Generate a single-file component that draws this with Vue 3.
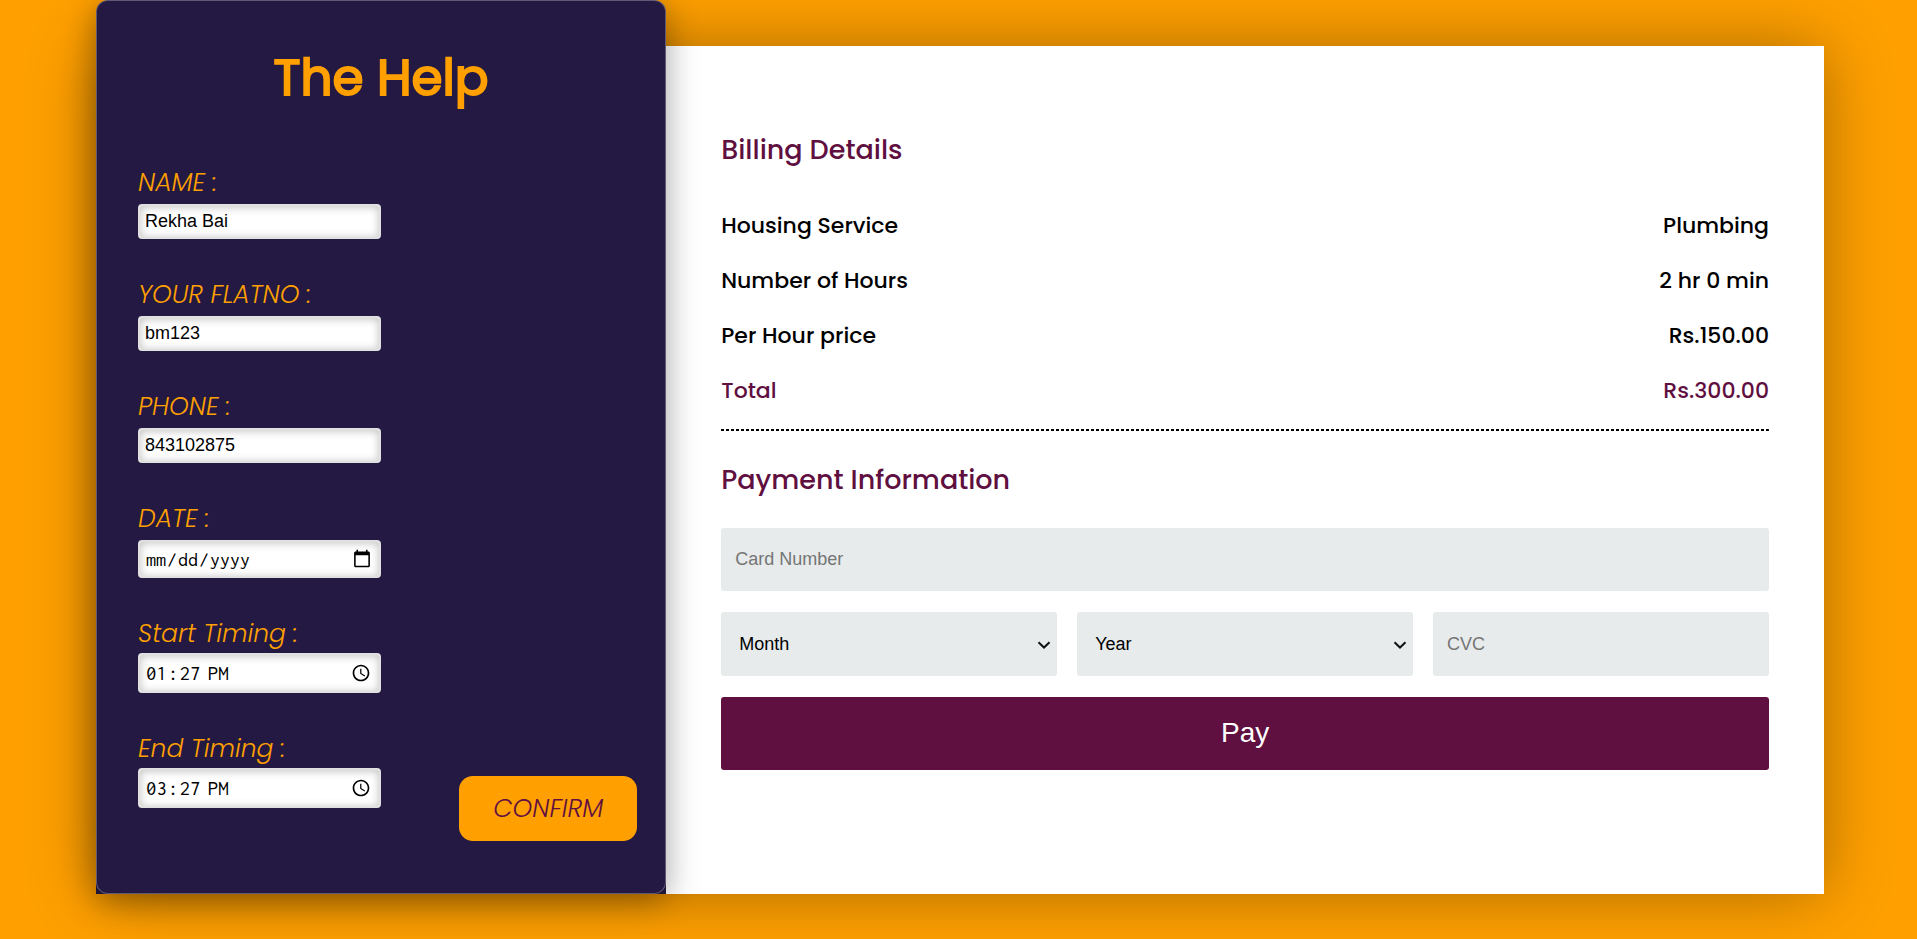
<script setup>
import { ref } from 'vue'

const name = ref('Rekha Bai')
const flat = ref('bm123')
const phone = ref('843102875')
const date = ref('')
const start = ref('13:27')
const end = ref('15:27')
const card = ref('')
const month = ref('')
const year = ref('')
const cvc = ref('')

const months = ['Jan', 'Feb', 'Mar', 'Apr', 'May', 'Jun', 'Jul', 'Aug', 'Sep', 'Oct', 'Nov', 'Dec']
const years = [2022, 2023, 2024, 2025, 2026, 2027]

const bill = [
  { label: 'Housing Service', value: 'Plumbing' },
  { label: 'Number of Hours', value: '2 hr 0 min' },
  { label: 'Per Hour price', value: 'Rs.150.00' },
  { label: 'Total', value: 'Rs.300.00', total: true }
]
</script>

<template>
  <main class="page">
    <div class="card">
      <form class="booking" @submit.prevent>
        <h1>The Help</h1>
        <div class="field">
          <label for="name">NAME :</label>
          <input id="name" v-model="name" type="text">
        </div>
        <div class="field">
          <label for="flat">YOUR FLATNO :</label>
          <input id="flat" v-model="flat" type="text">
        </div>
        <div class="field">
          <label for="phone">PHONE :</label>
          <input id="phone" v-model="phone" type="text">
        </div>
        <div class="field">
          <label for="date">DATE :</label>
          <input id="date" v-model="date" class="date" type="date">
        </div>
        <div class="field timing">
          <label for="start">Start Timing :</label>
          <input id="start" v-model="start" class="time" type="time">
        </div>
        <div class="last">
          <div class="field timing">
            <label for="end">End Timing :</label>
            <input id="end" v-model="end" class="time" type="time">
          </div>
          <button class="confirm" type="submit">CONFIRM</button>
        </div>
      </form>

      <section class="payment">
        <h2>Billing Details</h2>
        <dl class="bill">
          <div v-for="row in bill" :key="row.label" class="bill-row" :class="{ total: row.total }">
            <dt>{{ row.label }}</dt>
            <dd>{{ row.value }}</dd>
          </div>
        </dl>
        <h2>Payment Information</h2>
        <form class="pay-form" @submit.prevent>
          <input v-model="card" class="wide" type="text" placeholder="Card Number" aria-label="Card Number">
          <div class="select">
            <select v-model="month" aria-label="Month">
              <option value="">Month</option>
              <option v-for="m in months" :key="m">{{ m }}</option>
            </select>
            <svg viewBox="0 0 14 8" aria-hidden="true"><path d="M1.5 1.2 7 6.5 12.5 1.2" /></svg>
          </div>
          <div class="select">
            <select v-model="year" aria-label="Year">
              <option value="">Year</option>
              <option v-for="y in years" :key="y">{{ y }}</option>
            </select>
            <svg viewBox="0 0 14 8" aria-hidden="true"><path d="M1.5 1.2 7 6.5 12.5 1.2" /></svg>
          </div>
          <input v-model="cvc" type="text" placeholder="CVC" aria-label="CVC">
          <button class="wide pay" type="submit">Pay</button>
        </form>
      </section>
    </div>
  </main>
</template>

<style>
body {
  margin: 0;
  background: #ffa000;
}
</style>

<style scoped>
.page,
.page * {
  box-sizing: border-box;
}

.page {
  display: flex;
  min-height: 100vh;
  padding: 46px 93px 45px 96px;
  overflow: hidden;
  font-family: Poppins, Inter, "Open Sans", sans-serif;
  background: #ffa000;
}

.card {
  display: flex;
  flex: 1;
  background: #241942;
  box-shadow: 0 0 64px rgba(0, 0, 0, 0.33);
}

.booking {
  position: relative;
  flex: 0 0 33%;
  margin-top: -46px;
  padding: 41px 28px 52px 41px;
  border: 1px solid rgba(255, 255, 255, 0.28);
  border-radius: 12px;
  background: #241942;
  box-shadow: 0 6px 32px rgba(0, 0, 0, 0.37);
}

h1 {
  margin: 0 0 49px;
  padding-right: 13px;
  font-size: 50px;
  font-weight: 400;
  line-height: 72px;
  text-align: center;
  color: #ffa000;
  -webkit-text-stroke: 2px #ffa000;
}

.field {
  display: flex;
  flex-direction: column;
  align-items: flex-start;
  gap: 2px;
  margin-bottom: 36px;
}

.field.timing {
  gap: 0;
}

label {
  font-size: 25px;
  font-style: italic;
  font-weight: 300;
  line-height: 39px;
  color: #ffa000;
}

.field input {
  width: 243px;
  height: 35px;
  padding: 0 5px;
  border: 2px solid #e0e0e0;
  border-radius: 4px;
  font: 18px "Liberation Sans", Arial, sans-serif;
  color: #000;
  background: #fff;
  box-shadow: inset 0 1px 8px rgba(0, 0, 0, 0.25);
}

.field .date,
.field .time {
  font-family: Consolas, Inconsolata, "Liberation Mono", monospace;
}

.field .date {
  height: 38px;
  font-size: 20px;
}

.field .time {
  height: 40px;
  font-size: 21px;
}

.field input::-webkit-calendar-picker-indicator {
  width: 20px;
  height: 20px;
}

.last {
  display: flex;
  justify-content: space-between;
  align-items: flex-start;
}

.last .field {
  margin-bottom: 0;
}

.confirm {
  width: 178px;
  height: 65px;
  margin-top: 47px;
  border: 0;
  border-radius: 14px;
  font: italic 300 25px Poppins, Inter, "Open Sans", sans-serif;
  color: #5f0f40;
  background: #ffa000;
}

.payment {
  flex: 1;
  padding: 81px 55px 0;
  background: #fff;
}

h2 {
  margin: 0;
  font-size: 27px;
  font-weight: 500;
  line-height: 46px;
  color: #5f0f40;
}

.bill {
  margin: 0 0 26px;
  padding: 25px 0 13px;
  background: repeating-linear-gradient(90deg, #000 0 3px, transparent 3px 5px) bottom / 100% 2px no-repeat;
}

.bill-row {
  display: flex;
  justify-content: space-between;
  font-size: 22px;
  font-weight: 500;
  line-height: 55px;
  color: #000;
}

.bill-row.total {
  color: #5f0f40;
}

dd {
  margin: 0;
}

.pay-form {
  display: grid;
  grid-template-columns: repeat(3, 1fr);
  gap: 21px 20px;
  margin-top: 25px;
}

.wide {
  grid-column: 1 / -1;
}

.pay-form input,
.pay-form select {
  width: 100%;
  height: 64px;
  padding: 0 14px;
  border: 0;
  border-radius: 3px;
  font: 18px "Liberation Sans", Arial, sans-serif;
  color: #000;
  background: #e7ebec;
}

.pay-form .wide {
  height: 63px;
}

.pay-form input::placeholder {
  color: #757575;
}

.select {
  position: relative;
}

.pay-form select {
  padding: 0 18px;
  appearance: none;
}

.select svg {
  position: absolute;
  top: 29px;
  right: 6px;
  width: 14px;
  height: 8px;
  fill: none;
  stroke: #111;
  stroke-width: 2;
  pointer-events: none;
}

.pay-form .pay {
  height: 73px;
  padding: 0 0 2px;
  border: 0;
  border-radius: 3px;
  font: 28px "Liberation Sans", Arial, sans-serif;
  color: #fff;
  background: #5f0f40;
}
</style>
